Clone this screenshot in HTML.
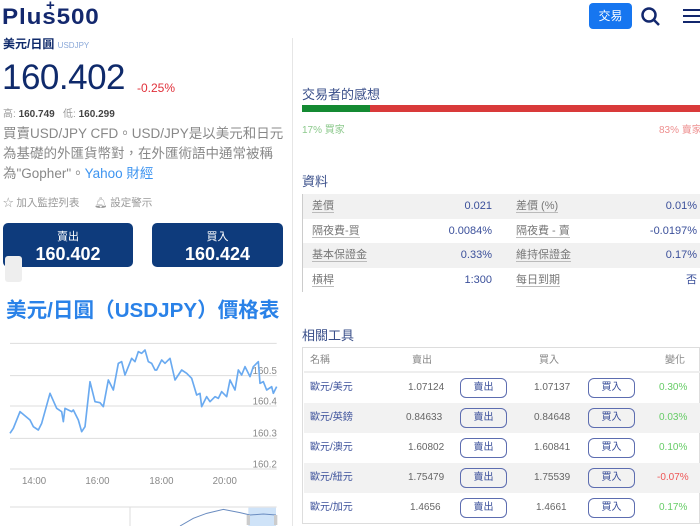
<!DOCTYPE html>
<html><head><meta charset="utf-8"><style>
*{margin:0;padding:0;box-sizing:border-box}
body{width:700px;height:526px;overflow:hidden;background:#fff;font-family:"Liberation Sans","Noto Sans CJK TC",sans-serif;position:relative;color:#333}
.a{position:absolute;white-space:nowrap}
.navy{color:#0f2a6b}
.btn{position:absolute;background:#0e3b7c;border-radius:5px;color:#fff;text-align:center}
.t1 .r{position:absolute;left:0;width:398px;height:24.5px;font-size:11px}
.t1 .g{background:#f1f1f1}
.t1 span{position:absolute;top:6px;line-height:12px}
.lb{color:#777;border-bottom:1px solid #bbb;line-height:12px}
.vv{color:#3a4f9a}
.t2 .r{position:absolute;left:1px;width:397px;height:30px;font-size:10px}
.t2 span{position:absolute;top:9px;line-height:12px}
.sb{position:absolute;top:5px;width:47px;height:20px;border:1.5px solid #5d6db0;border-radius:6px;color:#3a4f9a;text-align:center;line-height:17px;font-size:10px}
</style></head><body>
<div class="a" style="left:2px;top:4px;font-size:22px;font-weight:900;color:#13286e;letter-spacing:0.8px;transform:scaleX(1.1);transform-origin:left">Plus500</div>
<div class="a" style="left:46px;top:-3px;font-size:15px;font-weight:900;color:#13286e">+</div>
<div class="a" style="left:589px;top:3px;width:43px;height:26px;background:#1676f0;border-radius:4px;color:#fff;font-size:12px;text-align:center;line-height:26px">交易</div>
<svg class="a" style="left:640px;top:6px" width="22" height="22" viewBox="0 0 22 22"><circle cx="9" cy="9" r="6.5" fill="none" stroke="#13286e" stroke-width="2.5"/><line x1="13.5" y1="13.5" x2="19" y2="19" stroke="#13286e" stroke-width="2.5"/></svg>
<svg class="a" style="left:683px;top:9px" width="17" height="14"><rect y="0" width="17" height="2" fill="#13286e"/><rect y="6" width="17" height="2" fill="#13286e"/><rect y="12" width="17" height="2" fill="#13286e"/></svg>
<div class="a" style="left:292px;top:38px;width:1px;height:488px;background:#e6e6e6"></div>

<div class="a navy" style="left:3px;top:35px;font-size:12px;font-weight:bold">美元/日圓 <span style="font-size:8px;font-weight:normal;color:#8aa8d8">USDJPY</span></div>
<div class="a navy" style="left:2px;top:58px;font-size:35px;letter-spacing:-0.5px">160.402</div>
<div class="a" style="left:137px;top:81px;font-size:12px;color:#e0303a">-0.25%</div>
<div class="a" style="left:3px;top:105px;font-size:10px;color:#999">高: <b style="color:#444">160.749</b> &nbsp; 低: <b style="color:#444">160.299</b></div>
<div class="a" style="left:3px;top:124px;font-size:13.5px;line-height:20px;color:#888;white-space:normal;width:290px">買賣USD/JPY CFD。USD/JPY是以美元和日元為基礎的外匯貨幣對，在外匯術語中通常被稱為"Gopher"。<span style="color:#3d94f0">Yahoo 財經</span></div>
<div class="a" style="left:3px;top:195px;font-size:10.5px;color:#999">☆ 加入監控列表 &nbsp; &nbsp; 🔔︎ 設定警示</div>
<div class="btn" style="left:3px;top:223px;width:130px;height:44px"><div style="font-size:11px;margin-top:5px">賣出</div><div style="font-size:18px;font-weight:bold">160.402</div></div>
<div class="btn" style="left:152px;top:223px;width:131px;height:44px"><div style="font-size:11px;margin-top:5px">買入</div><div style="font-size:18px;font-weight:bold">160.424</div></div>
<div class="a" style="left:5px;top:256px;width:17px;height:26px;background:#eee;border-radius:3px"></div>
<div class="a" style="left:6px;top:293px;font-size:20.6px;font-weight:bold;color:#2a82e8">美元/日圓（USDJPY）價格表</div>
<svg class="a" style="left:0;top:280px" width="300" height="246" viewBox="0 0 900 738">
<g stroke="#ddd" stroke-width="3"><line x1="30" y1="190" x2="830" y2="190"/><line x1="30" y1="287" x2="830" y2="287"/><line x1="30" y1="378" x2="830" y2="378"/><line x1="30" y1="475" x2="830" y2="475"/><line x1="30" y1="567" x2="830" y2="567"/><line x1="30" y1="681" x2="830" y2="681"/><line x1="390" y1="681" x2="390" y2="738"/></g>
<g fill="#888" font-size="29" font-family="Liberation Sans"><text x="758" y="282">160.5</text><text x="758" y="374">160.4</text><text x="758" y="470">160.3</text><text x="758" y="562">160.2</text><text x="66" y="612">14:00</text><text x="256" y="612">16:00</text><text x="448" y="612">18:00</text><text x="638" y="612">20:00</text></g>
<polyline fill="none" stroke="#6aaaf0" stroke-width="5" stroke-linejoin="round" points="30,460 40,445 60,395 90,420 100,440 115,450 125,430 150,340 170,385 185,395 190,425 195,385 215,395 220,390 235,420 245,455 255,440 270,305 285,365 300,368 310,380 325,300 340,330 355,250 365,245 375,285 395,235 405,245 415,215 425,220 435,210 445,245 455,250 465,270 470,270 485,240 495,250 510,235 525,300 545,270 560,280 575,295 590,345 600,340 605,380 620,350 630,365 645,350 655,355 665,335 680,350 690,300 705,330 715,270 725,285 735,260 750,290 760,260 770,250 775,245 780,310 790,305 800,330 815,320 820,340 830,320"/>
<rect x="745" y="683" width="83" height="55" fill="#cfe3f8"/>
<polyline fill="none" stroke="#6a8cc0" stroke-width="3" points="540,738 580,715 620,700 670,688 720,698 750,705 790,702 828,705"/>
<rect x="740" y="705" width="10" height="30" fill="#ccc"/><rect x="822" y="705" width="10" height="30" fill="#ccc"/>
</svg>

<div class="a" style="left:302px;top:84px;font-size:13px;color:#3a4f8a">交易者的感想</div>
<div class="a" style="left:302px;top:105px;width:398px;height:7px;background:#d93a3a"></div>
<div class="a" style="left:302px;top:105px;width:68px;height:7px;background:#148a32"></div>
<div class="a" style="left:302px;top:121px;font-size:10px;color:#8cc98c">17% 買家</div>
<div class="a" style="left:659px;top:121px;font-size:10px;color:#ee9090">83% 賣家</div>

<div class="a" style="left:302px;top:171px;font-size:13px;color:#3a4f8a">資料</div>
<div class="a t1" style="left:302px;top:194px;width:398px;height:98px;border-left:1px solid #ccc">
<div class="r g" style="top:0"><span class="lb" style="left:9px">差價</span><span class="vv" style="right:209px">0.021</span><span class="lb" style="left:213px">差價 (%)</span><span class="vv" style="right:4px">0.01%</span></div>
<div class="r" style="top:24.5px"><span class="lb" style="left:9px">隔夜費-買</span><span class="vv" style="right:209px">0.0084%</span><span class="lb" style="left:213px">隔夜費 - 賣</span><span class="vv" style="right:4px">-0.0197%</span></div>
<div class="r g" style="top:49px"><span class="lb" style="left:9px">基本保證金</span><span class="vv" style="right:209px">0.33%</span><span class="lb" style="left:213px">維持保證金</span><span class="vv" style="right:4px">0.17%</span></div>
<div class="r" style="top:73.5px"><span class="lb" style="left:9px">槓桿</span><span class="vv" style="right:209px">1:300</span><span class="lb" style="left:213px">每日到期</span><span class="vv" style="right:4px">否</span></div>
</div>

<div class="a" style="left:302px;top:325px;font-size:13px;color:#3a4f8a">相關工具</div>
<div class="a t2" style="left:302px;top:347px;width:398px;height:177px;border:1px solid #ddd">
<div class="r" style="top:0;height:25px;border-bottom:2px solid #eee;color:#888"><span style="left:6px;top:7px">名稱</span><span style="left:108px;top:7px">賣出</span><span style="left:235px;top:7px">買入</span><span style="left:361px;top:7px">變化</span></div>
<div class="r" style="top:25px"><span class="vv" style="left:6px">歐元/美元</span><span style="left:104px;color:#666">1.07124</span><div class="sb" style="left:156px">賣出</div><span style="left:230px;color:#666">1.07137</span><div class="sb" style="left:284px">買入</div><span style="left:355px;color:#6c6">0.30%</span></div>
<div class="r" style="top:55px;background:#f2f2f2"><span class="vv" style="left:6px">歐元/英鎊</span><span style="left:102px;color:#666">0.84633</span><div class="sb" style="left:156px">賣出</div><span style="left:230px;color:#666">0.84648</span><div class="sb" style="left:284px">買入</div><span style="left:355px;color:#6c6">0.03%</span></div>
<div class="r" style="top:85px"><span class="vv" style="left:6px">歐元/澳元</span><span style="left:104px;color:#666">1.60802</span><div class="sb" style="left:156px">賣出</div><span style="left:230px;color:#666">1.60841</span><div class="sb" style="left:284px">買入</div><span style="left:355px;color:#6c6">0.10%</span></div>
<div class="r" style="top:115px;background:#f2f2f2"><span class="vv" style="left:6px">歐元/紐元</span><span style="left:104px;color:#666">1.75479</span><div class="sb" style="left:156px">賣出</div><span style="left:230px;color:#666">1.75539</span><div class="sb" style="left:284px">買入</div><span style="left:353px;color:#e55">-0.07%</span></div>
<div class="r" style="top:145px"><span class="vv" style="left:6px">歐元/加元</span><span style="left:106px;color:#666">1.4656</span><div class="sb" style="left:156px">賣出</div><span style="left:232px;color:#666">1.4661</span><div class="sb" style="left:284px">買入</div><span style="left:355px;color:#6c6">0.17%</span></div>
</div>
</body></html>
